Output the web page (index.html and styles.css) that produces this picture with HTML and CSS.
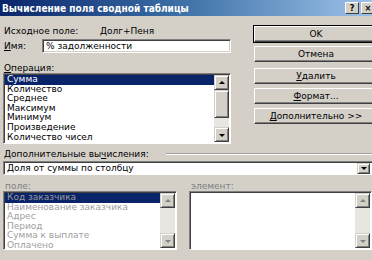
FILE: index.html
```html
<!DOCTYPE html>
<html lang="ru">
<head>
  <meta charset="UTF-8">
  <title>Вычисление поля сводной таблицы</title>
  <link rel="stylesheet" href="styles.css">
</head>
<body>
  <div class="dialog">
    <!-- Title bar -->
    <div class="titlebar">
      <span class="title">Вычисление поля сводной таблицы</span>
      <span class="caption-btns">
        <span class="cbtn">?</span>
        <span class="cbtn close">×</span>
      </span>
    </div>

    <div class="main">
      <div class="left">
        <div class="row source">
          <span class="lbl">Исходное поле:</span>
          <span class="val">Долг+Пеня</span>
        </div>
        <div class="row name">
          <span class="lbl"><u>И</u>мя:</span>
          <div class="input">% задолженности</div>
        </div>
        <div class="caption"><u>О</u>перация:</div>
        <div class="listbox ops">
          <ul class="items">
            <li class="selected">Сумма</li>
            <li>Количество</li>
            <li>Среднее</li>
            <li>Максимум</li>
            <li>Минимум</li>
            <li>Произведение</li>
            <li>Количество чисел</li>
          </ul>
          <div class="scrollbar">
            <span class="arrow up"></span>
            <span class="thumb"></span>
            <span class="track"></span>
            <span class="arrow down"></span>
          </div>
        </div>
      </div>

      <div class="buttons">
        <button class="btn default">OK</button>
        <button class="btn">Отмена</button>
        <button class="btn spaced"><u>У</u>далить</button>
        <button class="btn"><u>Ф</u>ормат...</button>
        <button class="btn"><u>Д</u>ополнительно &gt;&gt;</button>
      </div>
    </div>

    <!-- Additional calculations -->
    <div class="extra-head">
      <span>Дополнительные вы<u>ч</u>исления:</span>
      <span class="etch"></span>
    </div>
    <div class="combo">
      <span class="combo-text">Доля от суммы по столбцу</span>
      <span class="arrow down"></span>
    </div>

    <div class="fields">
      <div class="col field-col">
        <div class="caption dim">поле:</div>
        <div class="listbox disabled">
          <ul class="items">
            <li class="selected">Код заказчика</li>
            <li>Наименование заказчика</li>
            <li>Адрес</li>
            <li>Период</li>
            <li>Сумма к выплате</li>
            <li>Оплачено</li>
          </ul>
          <div class="scrollbar">
            <span class="arrow up"></span>
            <span class="track"></span>
            <span class="arrow down"></span>
          </div>
        </div>
      </div>
      <div class="col item-col">
        <div class="caption dim">элемент:</div>
        <div class="listbox disabled">
          <ul class="items"></ul>
          <div class="scrollbar">
            <span class="arrow up"></span>
            <span class="track"></span>
            <span class="arrow down"></span>
          </div>
        </div>
      </div>
    </div>
  </div>
</body>
</html>
```

FILE: styles.css
```css
body { margin: 0; overflow: hidden; background: #d4d0c8; }
.dialog { width: 390px; height: 260px; background: #d4d0c8; font-family: "DejaVu Sans", sans-serif; font-size: 9px; color: #000; }
u { text-decoration: underline; text-underline-offset: 1px; }

/* Title bar */
.titlebar { height: 16px; display: flex; align-items: center; justify-content: space-between; padding: 0 0 0 2px; background: linear-gradient(to right, #0a246a 0%, #3a6ea5 45%, #a6caf0 100%); color: #fff; font-family: "DejaVu Sans Condensed", "DejaVu Sans", sans-serif; font-weight: bold; font-size: 10px; }
.caption-btns { display: flex; gap: 2px; width: 45px; }
.cbtn { width: 12px; height: 10px; background: #d4d0c8; color: #000; font-size: 9px; line-height: 10px; text-align: center; border: 1px solid; border-color: #fff #404040 #404040 #fff; }

/* Top section */
.main { display: flex; }
.left { width: 228px; padding-left: 3px; }
.row { display: flex; align-items: center; }
.source { height: 14px; margin-top: 8px; }
.lbl { padding-left: 1px; width: 38px; }
.source .lbl { width: 96px; }
.name { height: 16px; }
.input { flex: 1; height: 12px; line-height: 12px; padding-left: 3px; background: #fff; border: 1px solid; border-color: #808080 #fff #fff #808080; box-shadow: inset 1px 1px #404040, inset -1px -1px #d4d0c8; }
.caption { height: 10px; line-height: 10px; margin-top: 9px; padding-left: 1px; }
.caption.dim { color: #808080; margin-top: 6px; }

/* List boxes */
.listbox { display: flex; background: #fff; border: 1px solid; border-color: #808080 #fff #fff #808080; box-shadow: inset 1px 1px #404040; }
.ops { height: 69px; }
.items { flex: 1; list-style: none; margin: 0; padding: 1px 0 0 1px; overflow: hidden; }
.items li { height: 9.6px; line-height: 9.6px; padding-left: 2px; white-space: nowrap; }
.items li.selected { background: #0a246a; color: #fff; }
.disabled .items li { color: #a0a0a0; }
.disabled .items li.selected { color: #9a9a9a; }

.scrollbar { width: 15px; display: flex; flex-direction: column; background: #e8e6e1; margin: 1px 1px 1px 0; }
.scrollbar .track { flex: 1; }
.arrow { position: relative; height: 13px; background: #d4d0c8; border: 1px solid; border-color: #d4d0c8 #404040 #404040 #d4d0c8; box-shadow: inset 1px 1px #fff, inset -1px -1px #808080; flex: none; }
.arrow::after { content: ""; position: absolute; left: 50%; top: 50%; margin: -2px 0 0 -3px; border-left: 3px solid transparent; border-right: 3px solid transparent; }
.arrow.up::after { border-bottom: 3px solid #000; }
.arrow.down::after { border-top: 3px solid #000; margin-top: -1px; }
.disabled .arrow.up::after { border-bottom-color: #808080; }
.disabled .arrow.down::after { border-top-color: #808080; }
.thumb { height: 26px; background: #d4d0c8; border: 1px solid; border-color: #d4d0c8 #404040 #404040 #d4d0c8; box-shadow: inset 1px 1px #fff, inset -1px -1px #808080; }

/* Buttons column */
.buttons { display: flex; flex-direction: column; gap: 4px; margin: 10px 0 0 23px; }
.btn { width: 124px; height: 16px; padding: 0; font: inherit; color: #000; background: #d4d0c8; border: 1px solid; border-color: #fff #404040 #404040 #fff; box-shadow: inset -1px -1px #808080; }
.btn.default { outline: 1px solid #000; outline-offset: 0; }
.btn.spaced { margin-top: 2px; }

/* Additional calculations */
.extra-head { display: flex; align-items: center; height: 12px; margin-top: 4px; padding-left: 4px; gap: 17px; }
.etch { flex: 1; height: 0; border-top: 1px solid #a0a0a0; border-bottom: 1px solid #fff; margin-top: -1px; }
.combo { display: flex; align-items: center; height: 12px; margin: 1px 0 0 3px; background: #fff; border: 1px solid; border-color: #808080 #fff #fff #808080; box-shadow: inset 1px 1px #404040; }
.combo-text { flex: 1; padding-left: 3px; }
.combo .arrow { width: 11px; height: 9px; margin-right: 19px; }

.fields { display: flex; }
.col { display: flex; flex-direction: column; }
.field-col { width: 174px; margin-left: 3px; }
.item-col { flex: 1; margin-left: 12px; }
.fields .listbox { height: 57px; }
.item-col .listbox { margin-right: 18px; }
.fields .caption { padding-left: 2px; }
```
